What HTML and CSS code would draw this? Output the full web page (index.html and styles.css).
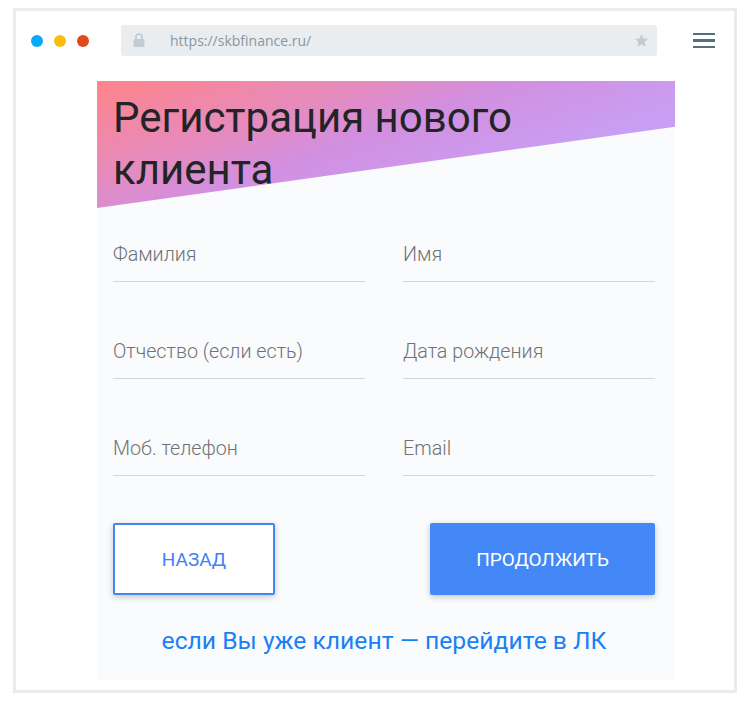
FILE: index.html
```html
<!DOCTYPE html>
<html lang="ru">
<head>
<meta charset="utf-8">
<title>Регистрация нового клиента</title>
<link rel="stylesheet" href="styles.css">
</head>
<body>
<div class="frame">
  <div class="toolbar">
    <div class="dots">
      <span class="dot dot-blue"></span>
      <span class="dot dot-yellow"></span>
      <span class="dot dot-red"></span>
    </div>
    <div class="urlbar">
      <svg class="lock" width="12" height="14" viewBox="0 0 12 14">
        <path d="M3 6V4.2a3 3 0 0 1 6 0V6" fill="none" stroke="#c3ccd4" stroke-width="1.8"/>
        <rect x="0.5" y="6" width="11" height="8" rx="1" fill="#c3ccd4"/>
      </svg>
      <span class="url">https://skbfinance.ru/</span>
      <svg class="star" width="15" height="15" viewBox="0 0 24 24">
        <path d="M12 1.5l3.2 7.1 7.6.7-5.8 5.1 1.8 7.6L12 18l-6.8 4 1.8-7.6L1.2 9.3l7.6-.7z" fill="#c2cbd3"/>
      </svg>
    </div>
    <div class="burger">
      <span></span><span></span><span></span>
    </div>
  </div>
  <div class="card">
    <div class="hero">
      <h1 class="title">Регистрация нового клиента</h1>
    </div>
    <div class="fields">
      <div class="field">Фамилия</div>
      <div class="field">Имя</div>
      <div class="field">Отчество (если есть)</div>
      <div class="field">Дата рождения</div>
      <div class="field">Моб. телефон</div>
      <div class="field">Email</div>
    </div>
    <div class="buttons">
      <button class="btn btn-back">НАЗАД</button>
      <button class="btn btn-next">ПРОДОЛЖИТЬ</button>
    </div>
    <a class="login-link" href="#">если Вы уже клиент — перейдите в ЛК</a>
  </div>
</div>
</body>
</html>
```

FILE: styles.css
```css
html, body {
  margin: 0;
  padding: 0;
  background: #ffffff;
}

body {
  font-family: Roboto, "Liberation Sans", sans-serif;
}

.frame {
  box-sizing: border-box;
  width: 724px;
  height: 685px;
  margin: 8px 0 0 13px;
  border: 3px solid #e8ecef;
  background: #ffffff;
}

.toolbar {
  display: flex;
  align-items: center;
  padding: 14px 19px 0 15px;
  height: 31px;
}

.dots {
  display: flex;
  gap: 11px;
}

.dot {
  width: 12px;
  height: 12px;
  border-radius: 50%;
  display: block;
}

.dot-blue { background: #0aa8f8; }
.dot-yellow { background: #fdbd0f; }
.dot-red { background: #e2481f; }

.urlbar {
  margin-left: 32px;
  width: 536px;
  height: 31px;
  box-sizing: border-box;
  background: #e9edf0;
  border-radius: 3px;
  display: flex;
  align-items: center;
  padding: 0 8px 0 12px;
}

.lock {
  display: block;
  margin-top: -1px;
}

.url {
  margin-left: 25px;
  font-family: "Open Sans", "Liberation Sans", sans-serif;
  font-size: 14px;
  color: #8797a3;
  flex: 1;
}

.star {
  display: block;
}

.burger {
  margin-left: 36px;
  width: 22px;
  display: flex;
  flex-direction: column;
  gap: 4px;
}

.burger span {
  display: block;
  height: 2.5px;
  background: #54707e;
}

.card {
  margin: 25px 0 0 81px;
  width: 578px;
  height: 599px;
  box-sizing: border-box;
  background: #fafbfd;
  display: flex;
  flex-direction: column;
}

.hero {
  height: 127px;
  background: linear-gradient(160deg, #ff8489 0%, #e58bbf 30%, #d28fe0 45%, #c99ef2 70%, #c6a7f7 100%);
  clip-path: polygon(0 0, 100% 0, 100% 36%, 0 100%);
  padding: 11px 0 0 16px;
  box-sizing: border-box;
}

.title {
  margin: 0;
  font-weight: 400;
  font-size: 42px;
  line-height: 52px;
  color: #222426;
  width: 440px;
}

.fields {
  display: grid;
  grid-template-columns: 252px 252px;
  column-gap: 38px;
  row-gap: 57px;
  padding: 34px 0 0 16px;
}

.field {
  font-size: 19.7px;
  font-weight: 300;
  line-height: 26px;
  color: #6f7275;
  padding-bottom: 13px;
  border-bottom: 1px solid #d3d6da;
}

.buttons {
  display: flex;
  justify-content: space-between;
  padding: 47px 20px 0 16px;
}

.btn {
  height: 72px;
  font-family: Roboto, "Liberation Sans", sans-serif;
  font-size: 19px;
  font-weight: 400;
  border-radius: 2px;
  box-shadow: 0 2px 6px rgba(0, 0, 0, 0.22);
  cursor: pointer;
}

.btn-back {
  width: 162px;
  background: #ffffff;
  border: 2px solid #4586f2;
  color: #3f82f0;
}

.btn-next {
  width: 225px;
  background: #4487f6;
  border: none;
  color: #ffffff;
}

.login-link {
  display: block;
  margin-top: 31px;
  padding-right: 4px;
  text-align: center;
  font-size: 24.7px;
  line-height: 30px;
  color: #1a80f4;
  text-decoration: none;
}
```
